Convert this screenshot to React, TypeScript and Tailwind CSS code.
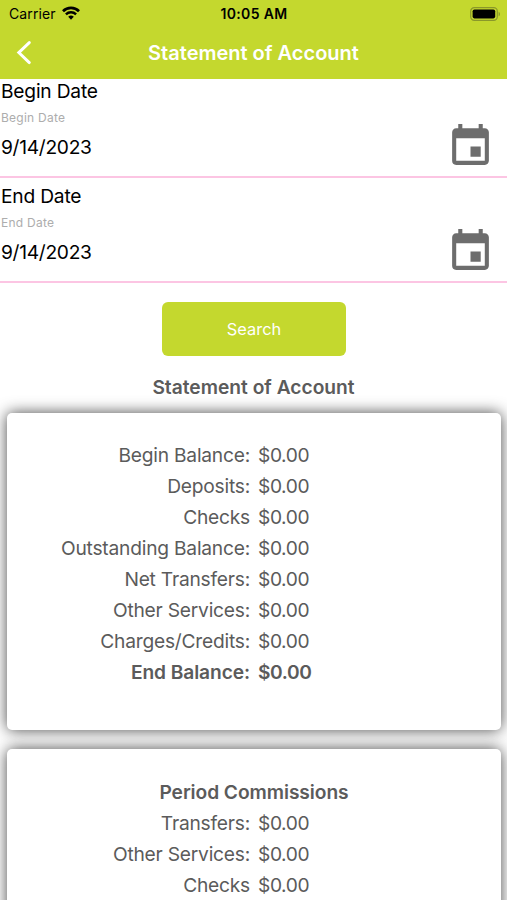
import { MdEvent } from "react-icons/md";

type Row = {
  label: string;
  value: string;
  bold?: boolean;
};

const STATEMENT_ROWS: Row[] = [
  { label: "Begin Balance:", value: "$0.00" },
  { label: "Deposits:", value: "$0.00" },
  { label: "Checks", value: "$0.00" },
  { label: "Outstanding Balance:", value: "$0.00" },
  { label: "Net Transfers:", value: "$0.00" },
  { label: "Other Services:", value: "$0.00" },
  { label: "Charges/Credits:", value: "$0.00" },
  { label: "End Balance:", value: "$0.00", bold: true },
];

const COMMISSION_ROWS: Row[] = [
  { label: "Transfers:", value: "$0.00" },
  { label: "Other Services:", value: "$0.00" },
  { label: "Checks", value: "$0.00" },
];

const StatusBar = () => (
  <div className="grid h-[27px] grid-cols-[1fr_auto_1fr] items-center pr-[6px] pl-[9px] text-black">
    <div className="flex items-center gap-[6px]">
      <span className="text-[14px] tracking-[0.1px]">Carrier</span>
      <svg className="mb-[2px] h-[14px] w-[18px]" viewBox="0 0 18 14" fill="none" stroke="currentColor">
        <path d="M1 5.2a11.3 11.3 0 0 1 16 0" strokeWidth="2.7" />
        <path d="M3.9 8.3a7.2 7.2 0 0 1 10.2 0" strokeWidth="2.4" />
        <path d="M9 13.7 6.2 10.8a4 4 0 0 1 5.6 0z" fill="currentColor" stroke="none" />
      </svg>
    </div>
    <span className="mr-[2px] text-center text-[14px] font-semibold tracking-[0.35px]">10:05 AM</span>
    <svg className="h-[14px] w-[31px] justify-self-end" viewBox="0 0 31 14">
      <rect x="0.7" y="0.7" width="26.6" height="12.6" rx="3.6" fill="none" stroke="#8a982a" strokeWidth="1.2" />
      <rect x="2.6" y="2.4" width="22.6" height="9" rx="1.8" fill="#000" />
      <path d="M28.6 4.7v4.6c1.9-.9 1.9-3.7 0-4.6z" fill="#8a982a" />
    </svg>
  </div>
);

const NavBar = () => (
  <div className="grid h-[52px] grid-cols-[60px_1fr_60px] items-center text-white">
    <svg className="ml-[16px] h-[24px] w-[16px]" viewBox="0 0 16 24" fill="none" stroke="currentColor" strokeWidth="2.9">
      <path d="M13.3 1.6 2.8 11.6l10.5 10" strokeLinecap="round" strokeLinejoin="miter" />
    </svg>
    <h1 className="text-center text-[20px] font-semibold">Statement of Account</h1>
  </div>
);

const DateField = ({ label, value }: { label: string; value: string }) => (
  <div className="flex h-[99px] items-end justify-between border-b-2 border-[#fcc5e3] pl-px">
    <div className="flex h-full flex-col text-black">
      <span className="text-[19.2px] leading-[24px] tracking-[-0.2px]">{label}</span>
      <span className="mt-[7px] text-[12px] leading-[16px] tracking-[0.25px] text-[#adadad]">{label}</span>
      <span className="mt-[9px] text-[19.2px] leading-[24px] tracking-[-0.3px]">{value}</span>
    </div>
    <MdEvent className="mr-[12px] mb-[5px] size-[49px] text-[#6d6d6d]" />
  </div>
);

const Card = ({ title, rows }: { title?: string; rows: Row[] }) => (
  <div className="h-[317px] rounded-[5px] bg-white pt-[27px] text-[19.2px] leading-[31px] text-[#5b5b5b] shadow-[0_0_15px_rgba(0,0,0,0.72)]">
    {title && <h3 className="pt-px text-center font-semibold tracking-[-0.07px]">{title}</h3>}
    {rows.map((row) => (
      <div
        key={row.label}
        className={
          row.bold
            ? "grid grid-cols-2 gap-[8px] font-semibold tracking-[-0.1px]"
            : "grid grid-cols-2 gap-[8px] tracking-[-0.22px]"
        }
      >
        <span className="text-right">{row.label}</span>
        <span className="tracking-[-0.42px]">{row.value}</span>
      </div>
    ))}
  </div>
);

export default function App() {
  return (
    <div className="h-[900px] w-full overflow-hidden bg-white font-['Inter',sans-serif]">
      <header className="bg-[#c4d82e]">
        <StatusBar />
        <NavBar />
      </header>
      <main>
        <div className="flex flex-col gap-[6px]">
          <DateField label="Begin Date" value="9/14/2023" />
          <DateField label="End Date" value="9/14/2023" />
        </div>
        <div className="flex justify-center pt-[19px]">
          <button className="h-[54px] w-[184px] rounded-[6px] bg-[#c4d82e] pl-px text-[16.4px] text-white">Search</button>
        </div>
        <h2 className="mt-[16px] text-center text-[19.2px] leading-[31px] font-semibold text-[#5b5b5b]">
          Statement of Account
        </h2>
        <div className="mt-[10px] flex flex-col gap-[19px] pr-[6px] pl-[7px]">
          <Card rows={STATEMENT_ROWS} />
          <Card title="Period Commissions" rows={COMMISSION_ROWS} />
        </div>
      </main>
    </div>
  );
}
